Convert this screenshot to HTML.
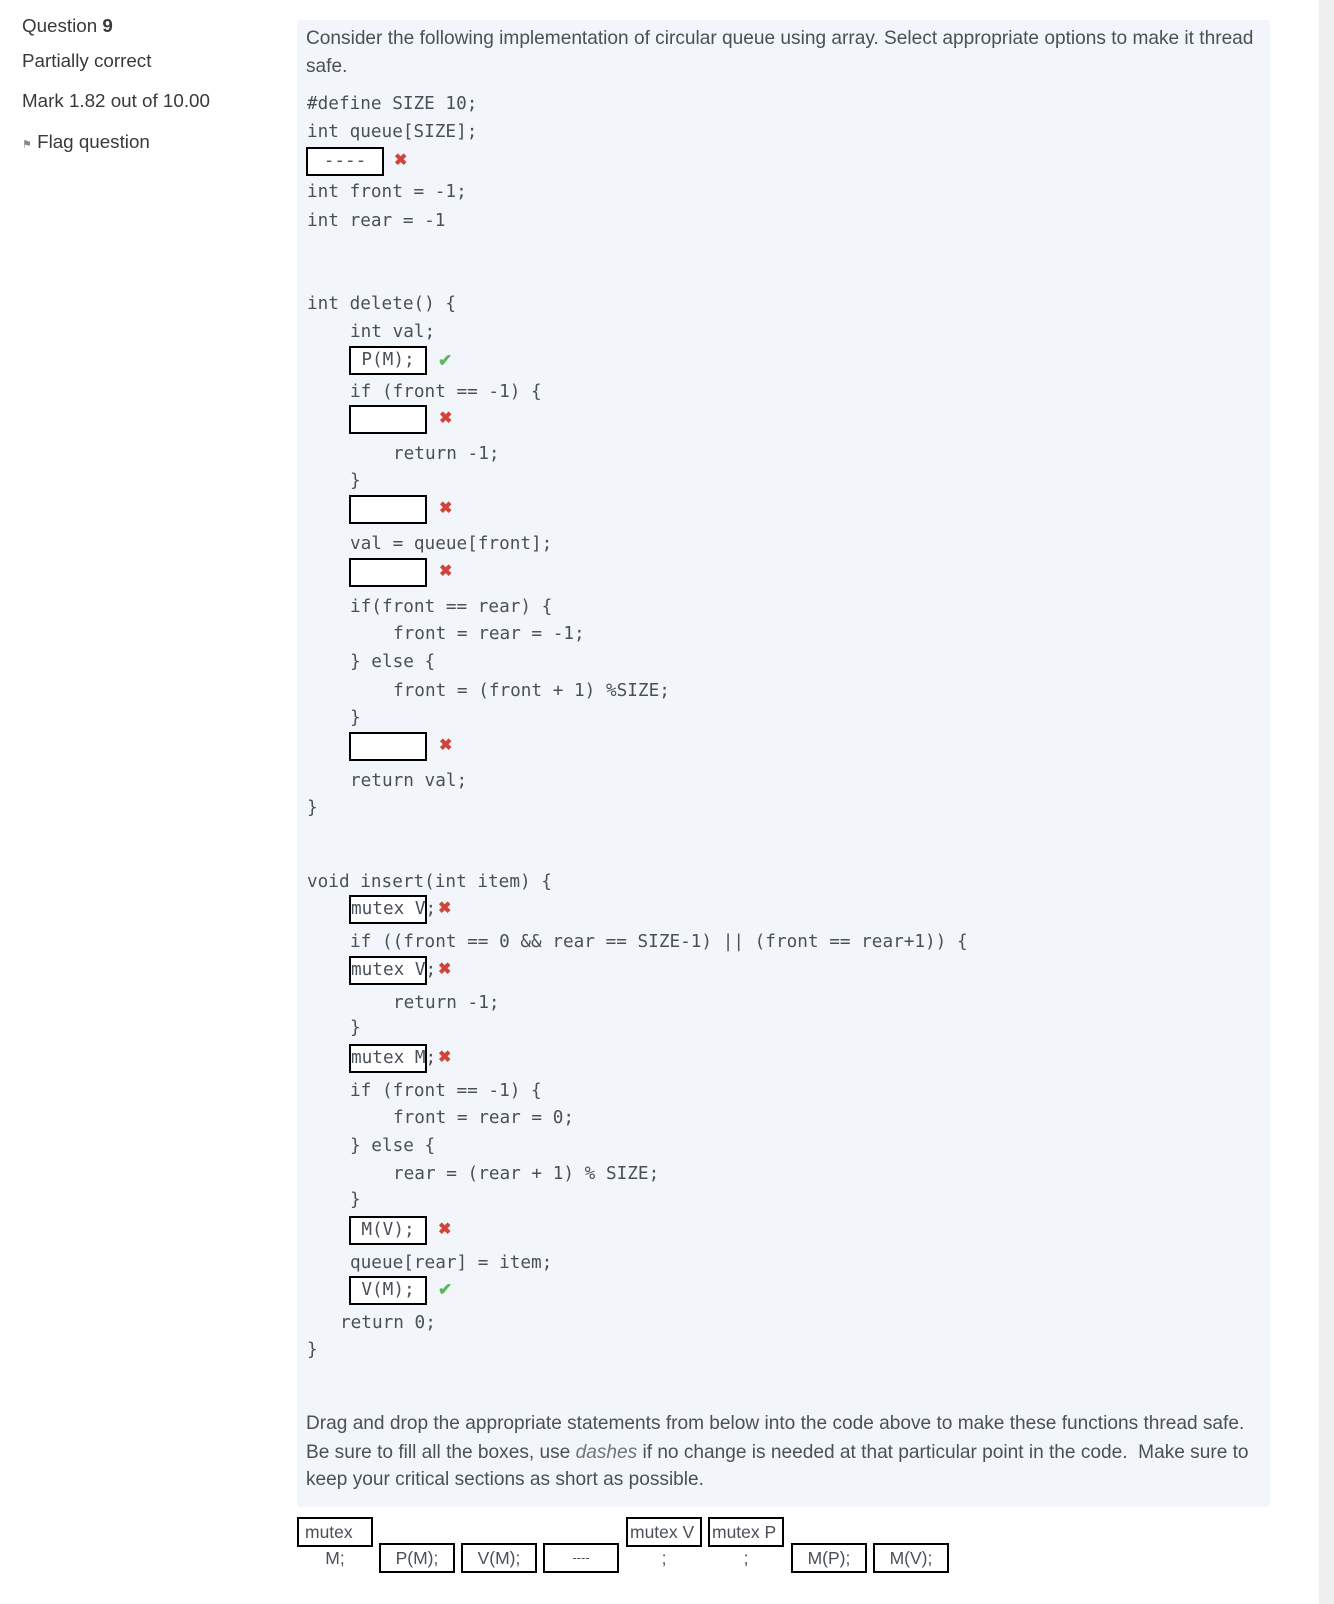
<!DOCTYPE html>
<html><head><meta charset="utf-8"><style>
body{margin:0;width:1334px;height:1604px;background:#fff;position:relative;overflow:hidden;font-family:"Liberation Sans",sans-serif;color:#373a3c}
.s{position:absolute;font-size:18.8px;line-height:24px;white-space:nowrap}
.panel{position:absolute;left:297px;top:20px;width:973px;height:1487px;background:#f2f6fa;border-radius:4px}
.c{position:absolute;font-family:"DejaVu Sans Mono","Liberation Mono",monospace;font-size:17.7px;line-height:26px;height:26px;color:#495057;white-space:pre;margin-top:1px}
.b{position:absolute;box-sizing:border-box;border:2px solid #000;background:#fff;width:78px;height:29px;font-family:"DejaVu Sans Mono",monospace;font-size:17.7px;line-height:25px;color:#495057;white-space:pre}
.x{position:absolute;color:#d0443a;font-size:16px;line-height:16px;font-weight:bold}
.k{position:absolute;color:#5cb85c;font-size:17px;line-height:18px;font-weight:bold}
.t{position:absolute;font-size:19.1px;line-height:28px;color:#495057;white-space:nowrap}
.d{position:absolute;box-sizing:border-box;border:2px solid #000;height:30px;font-size:17.5px;line-height:26px;color:#495057;text-align:center;background:#fff;white-space:nowrap;overflow:hidden}
.u{position:absolute;font-size:17.5px;color:#495057;text-align:center;line-height:20px}
</style></head><body>
<div class="s" style="left:22px;top:14px">Question <b>9</b></div>
<div class="s" style="left:22px;top:49px">Partially correct</div>
<div class="s" style="left:22px;top:89px">Mark 1.82 out of 10.00</div>
<div class="s" style="left:22px;top:130px"><span style="font-size:11px;color:#888">&#9873;</span> Flag question</div>
<div style="position:absolute;left:1319px;top:0;width:15px;height:1604px;background:#f0f0f0"></div>
<div class="panel"></div>
<div class="t" style="left:306px;top:25px">Consider the following implementation of circular queue using array. Select appropriate options to make it thread</div>
<div class="t" style="left:306px;top:53px">safe.</div>

<div class="c" style="left:307px;top:90px">#define SIZE 10;</div>
<div class="c" style="left:307px;top:118px">int queue[SIZE];</div>
<div class="b" style="left:306px;top:147px;text-align:center">----</div><div class="x" style="left:394px;top:153px">✖</div>
<div class="c" style="left:307px;top:178px">int front = -1;</div>
<div class="c" style="left:307px;top:207px">int rear = -1</div>

<div class="c" style="left:307px;top:290px">int delete() {</div>
<div class="c" style="left:350px;top:318px">int val;</div>
<div class="b" style="left:349px;top:346px;text-align:center">P(M);</div><div class="k" style="left:438px;top:352px">✔</div>
<div class="c" style="left:350px;top:378px">if (front == -1) {</div>
<div class="b" style="left:349px;top:405px"></div><div class="x" style="left:439px;top:411px">✖</div>
<div class="c" style="left:393px;top:440px">return -1;</div>
<div class="c" style="left:350px;top:467px">}</div>
<div class="b" style="left:349px;top:495px"></div><div class="x" style="left:439px;top:501px">✖</div>
<div class="c" style="left:350px;top:530px">val = queue[front];</div>
<div class="b" style="left:349px;top:558px"></div><div class="x" style="left:439px;top:564px">✖</div>
<div class="c" style="left:350px;top:593px">if(front == rear) {</div>
<div class="c" style="left:393px;top:620px">front = rear = -1;</div>
<div class="c" style="left:350px;top:648px">} else {</div>
<div class="c" style="left:393px;top:677px">front = (front + 1) %SIZE;</div>
<div class="c" style="left:350px;top:704px">}</div>
<div class="b" style="left:349px;top:732px"></div><div class="x" style="left:439px;top:738px">✖</div>
<div class="c" style="left:350px;top:767px">return val;</div>
<div class="c" style="left:307px;top:794px">}</div>

<div class="c" style="left:307px;top:868px">void insert(int item) {</div>
<div class="b" style="left:349px;top:895px"></div><div class="c" style="left:351px;top:895px">mutex V;</div><div class="x" style="left:438px;top:901px">✖</div>
<div class="c" style="left:350px;top:928px">if ((front == 0 &amp;&amp; rear == SIZE-1) || (front == rear+1)) {</div>
<div class="b" style="left:349px;top:956px"></div><div class="c" style="left:351px;top:956px">mutex V;</div><div class="x" style="left:438px;top:962px">✖</div>
<div class="c" style="left:393px;top:989px">return -1;</div>
<div class="c" style="left:350px;top:1014px">}</div>
<div class="b" style="left:349px;top:1044px"></div><div class="c" style="left:351px;top:1044px">mutex M;</div><div class="x" style="left:438px;top:1050px">✖</div>
<div class="c" style="left:350px;top:1077px">if (front == -1) {</div>
<div class="c" style="left:393px;top:1104px">front = rear = 0;</div>
<div class="c" style="left:350px;top:1132px">} else {</div>
<div class="c" style="left:393px;top:1160px">rear = (rear + 1) % SIZE;</div>
<div class="c" style="left:350px;top:1186px">}</div>
<div class="b" style="left:349px;top:1216px;text-align:center">M(V);</div><div class="x" style="left:438px;top:1222px">✖</div>
<div class="c" style="left:350px;top:1249px">queue[rear] = item;</div>
<div class="b" style="left:349px;top:1276px;text-align:center">V(M);</div><div class="k" style="left:438px;top:1281px">✔</div>
<div class="c" style="left:340px;top:1309px">return 0;</div>
<div class="c" style="left:307px;top:1336px">}</div>

<div class="t" style="left:306px;top:1410px">Drag and drop the appropriate statements from below into the code above to make these functions thread safe.</div>
<div class="t" style="left:306px;top:1439px">Be sure to fill all the boxes, use <i style="color:#6c757d">dashes</i> if no change is needed at that particular point in the code.&nbsp; Make sure to</div>
<div class="t" style="left:306px;top:1466px">keep your critical sections as short as possible.</div>

<div class="d" style="left:297px;top:1517px;width:76px;text-align:left;padding-left:6px">mutex</div>
<div class="u" style="left:297px;top:1548px;width:76px">M;</div>
<div class="d" style="left:379px;top:1543px;width:76px">P(M);</div>
<div class="d" style="left:461px;top:1543px;width:76px">V(M);</div>
<div class="d" style="left:543px;top:1543px;width:76px;font-size:13px">----</div>
<div class="d" style="left:626px;top:1517px;width:76px;padding:0 2px;text-align:left">mutex V</div>
<div class="u" style="left:626px;top:1548px;width:76px">;</div>
<div class="d" style="left:708px;top:1517px;width:76px;padding:0 2px;text-align:left">mutex P</div>
<div class="u" style="left:708px;top:1548px;width:76px">;</div>
<div class="d" style="left:791px;top:1543px;width:76px">M(P);</div>
<div class="d" style="left:873px;top:1543px;width:76px">M(V);</div>
</body></html>
